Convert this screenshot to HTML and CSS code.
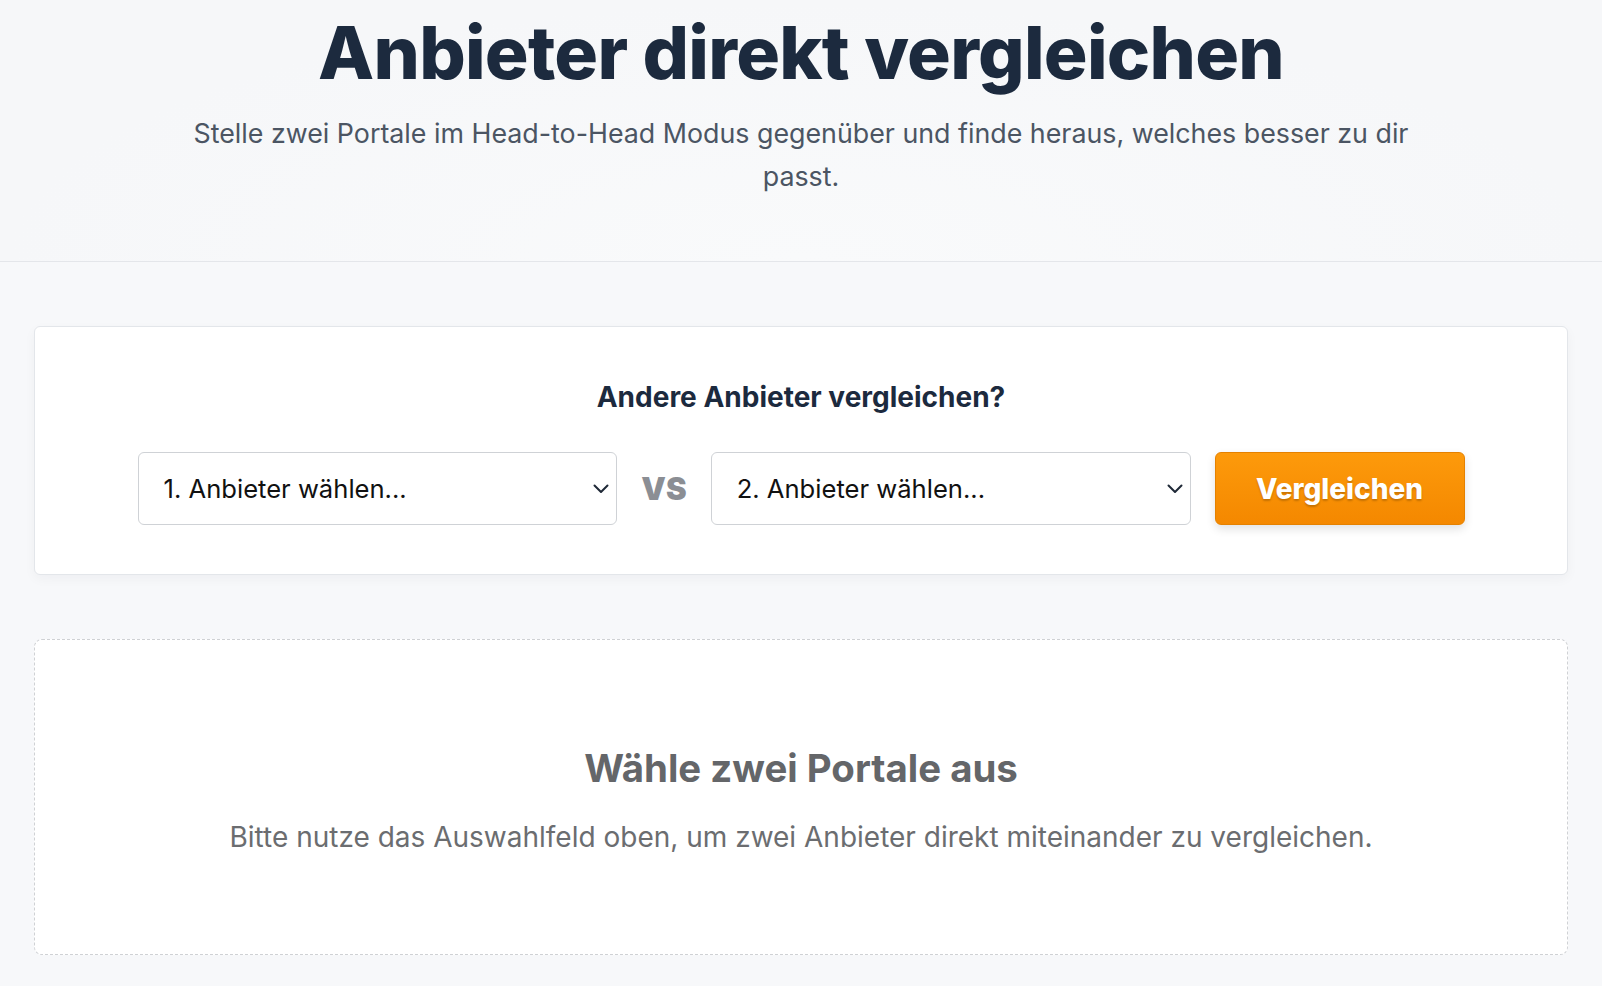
FILE: index.html
```html
<!DOCTYPE html>
<html lang="de">
<head>
  <meta charset="UTF-8" />
  <meta name="viewport" content="width=device-width, initial-scale=1.0"/>
  <title>Anbieter direkt vergleichen</title>
  <link rel="stylesheet" href="styles.css">
</head>
<body>
  <header class="hero">
    <h1 class="hero-title">Anbieter direkt vergleichen</h1>
    <p class="hero-lead">Stelle zwei Portale im Head-to-Head Modus gegenüber und finde heraus, welches besser zu dir passt.</p>
  </header>

  <main class="page">
    <section class="compare-card">
      <h2 class="compare-title">Andere Anbieter vergleichen?</h2>
      <form class="compare-row" onsubmit="return false;">
        <div class="select-wrap">
          <select class="provider-select" id="providerA">
            <option value="">1. Anbieter wählen...</option>
          </select>
          <svg class="select-arrow" width="16" height="10" viewBox="0 0 16 10" aria-hidden="true">
            <path d="M1.5 1.5 L8 8 L14.5 1.5" fill="none" stroke="#1f2937" stroke-width="2" stroke-linecap="round" stroke-linejoin="round"/>
          </svg>
        </div>
        <span class="vs">VS</span>
        <div class="select-wrap">
          <select class="provider-select" id="providerB">
            <option value="">2. Anbieter wählen...</option>
          </select>
          <svg class="select-arrow" width="16" height="10" viewBox="0 0 16 10" aria-hidden="true">
            <path d="M1.5 1.5 L8 8 L14.5 1.5" fill="none" stroke="#1f2937" stroke-width="2" stroke-linecap="round" stroke-linejoin="round"/>
          </svg>
        </div>
        <button class="btn-compare" type="submit">Vergleichen</button>
      </form>
    </section>

    <section class="empty-state">
      <h3 class="empty-title">Wähle zwei Portale aus</h3>
      <p class="empty-text">Bitte nutze das Auswahlfeld oben, um zwei Anbieter direkt miteinander zu vergleichen.</p>
    </section>
  </main>
</body>
</html>
```

FILE: styles.css
```css
* {
  box-sizing: border-box;
}
body {
  margin: 0;
  font-family: Inter, "Noto Sans", Arial, sans-serif;
  background-color: #f7f8fa;
  color: #1e293b;
}
.hero {
  padding: 10px 20px 63px;
  text-align: center;
  border-bottom: 1px solid #e4e6ea;
  background: radial-gradient(ellipse at 50% 100%, #f9fafb 0%, #f6f7f9 70%);
}
.hero-title {
  margin: 0;
  font-size: 73px;
  font-weight: 800;
  line-height: 86px;
  letter-spacing: -0.75px;
  color: #1c2a3e;
}
.hero-lead {
  max-width: 1240px;
  margin: 16px auto 0;
  font-size: 26.8px;
  line-height: 43px;
  color: #4b5563;
}
.page {
  padding: 64px 34px 40px;
}
.compare-card {
  background-color: #fff;
  border: 1px solid #e3e6ea;
  border-radius: 6px;
  box-shadow: 0 4px 12px rgba(15, 23, 42, 0.04);
  padding: 52px 20px 49px;
  text-align: center;
}
.compare-title {
  margin: 0 0 37px;
  font-size: 28px;
  font-weight: 700;
  line-height: 1.3;
  color: #1c2a3e;
}
.compare-row {
  display: flex;
  align-items: center;
  gap: 24px;
  max-width: 1327px;
  margin: 0 auto;
}
.select-wrap {
  position: relative;
  flex: 1;
}
.provider-select {
  width: 100%;
  height: 73px;
  padding: 0 40px 0 25px;
  appearance: none;
  -webkit-appearance: none;
  background-color: #fff;
  border: 1px solid #cfd2d6;
  border-radius: 6px;
  font-family: inherit;
  font-size: 25.6px;
  color: #111;
}
.select-arrow {
  position: absolute;
  right: 8px;
  top: 50%;
  transform: translateY(-50%);
  pointer-events: none;
}
.vs {
  font-size: 31px;
  font-weight: 900;
  color: #8b8e94;
}
.btn-compare {
  width: 250px;
  height: 73px;
  border: 1px solid #e58100;
  border-radius: 6px;
  background: linear-gradient(to bottom, #fd9a0b, #f48800);
  box-shadow: 0 4px 10px rgba(0, 0, 0, 0.12);
  font-family: inherit;
  font-size: 28px;
  font-weight: 800;
  color: #fff;
  text-shadow: 0 2px 2px rgba(0, 0, 0, 0.2);
  cursor: pointer;
}
.btn-compare:hover {
  background: linear-gradient(to bottom, #f59000, #e57e00);
}
.empty-state {
  margin-top: 64px;
  height: 316px;
  display: flex;
  flex-direction: column;
  justify-content: center;
  align-items: center;
  padding-top: 4px;
  background-color: #fff;
  border: 1px dashed #cfd1d4;
  border-radius: 8px;
  text-align: center;
}
.empty-title {
  margin: 0;
  font-size: 38.4px;
  font-weight: 700;
  color: #646669;
}
.empty-text {
  margin: 29px 0 0;
  font-size: 28px;
  color: #6b6d70;
}
```
